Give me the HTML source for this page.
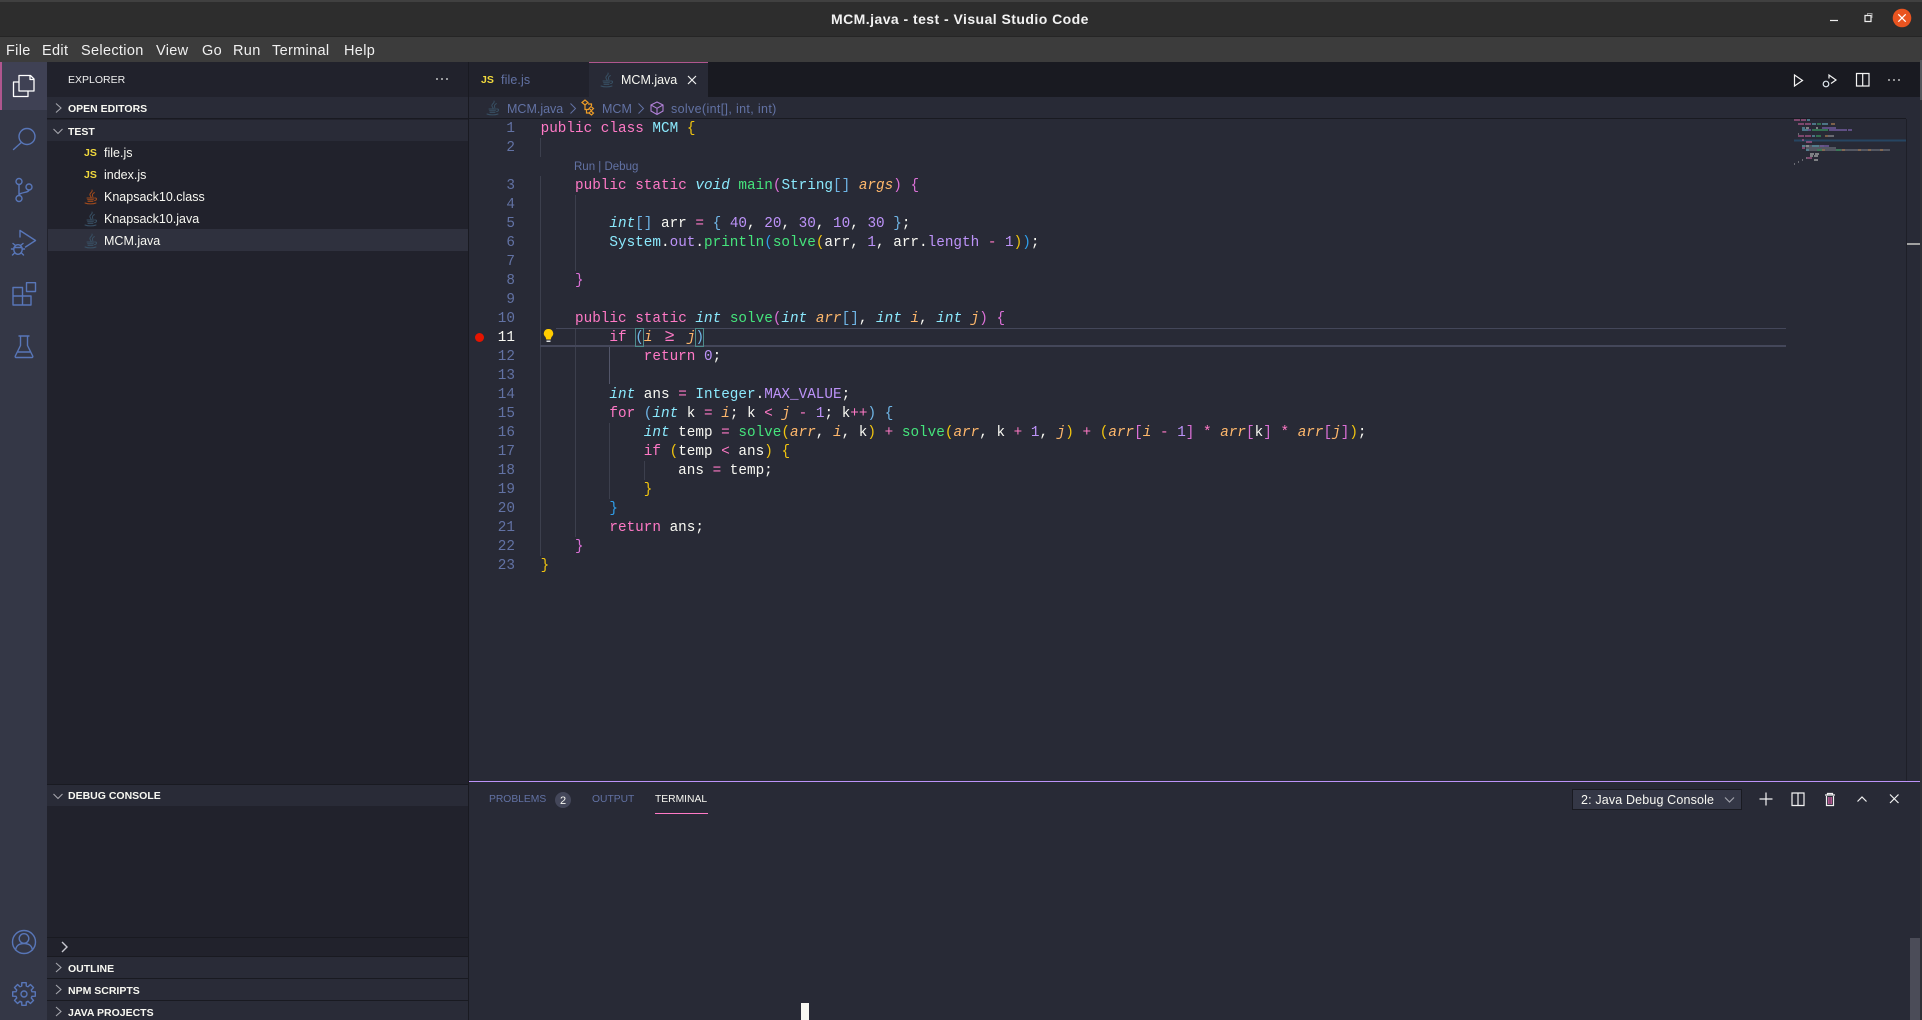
<!DOCTYPE html>
<html><head><meta charset="utf-8"><title>MCM.java - test - Visual Studio Code</title>
<style>
html,body{margin:0;padding:0;background:#282a36}
#r{position:relative;width:1922px;height:1020px;overflow:hidden;background:#282a36;font-family:"Liberation Sans",sans-serif;color:#f8f8f2}
.b{position:absolute}
.t{position:absolute;white-space:pre;font-size:12.5px;line-height:22px;height:22px;color:#f8f8f2}
.h{font-weight:bold;font-size:10.5px}
.m{font-size:14.5px;line-height:25px;height:25px;top:39px;letter-spacing:.33px;color:#f0f0f0}
.js{font-weight:bold;font-size:10.5px;color:#f1d93d}
.l{position:absolute;left:540.6px;height:19px;line-height:19px;white-space:pre;font-family:"Liberation Mono",monospace;font-size:14.33px;color:#f8f8f2}
.n{position:absolute;left:482px;width:33px;text-align:right;height:19px;line-height:19px;font-family:"Liberation Mono",monospace;font-size:14.33px;color:#6272a4}
.g{position:absolute;width:1px;background:#3c3f4d}
.k{color:#ff79c6}.ty{color:#8be9fd;font-style:italic}.c{color:#8be9fd}.f{color:#45e47c}.nu{color:#bd93f9}.p{color:#ffb86c;font-style:italic}.y{color:#f1c40f}.mm{color:#da70d6}.bl{color:#2f9eea}.lb{color:#6fb5e6}.v{color:#bd93f9}
.ge{display:inline-block;width:17.2px;text-align:center;font-size:17px;line-height:17px}
.pt{font-size:10.3px}
</style></head><body><div id="r">

<!-- title bar -->
<div class="b" style="left:0;top:0;width:1922px;height:37px;background:#2d2d2d;border-bottom:1px solid #252525;box-sizing:border-box"></div>
<div class="b" style="left:0;top:0;width:1922px;height:2px;background:#404040"></div>
<div class="t" style="left:831px;top:8px;font-weight:bold;font-size:14px;letter-spacing:.45px;color:#f2f2f2">MCM.java - test - Visual Studio Code</div>

<!-- menu -->
<div class="b" style="left:0;top:37px;width:1922px;height:25px;background:#3c3c3c"></div>
<div class="t m" style="left:6px">File</div>
<div class="t m" style="left:42px">Edit</div>
<div class="t m" style="left:81px">Selection</div>
<div class="t m" style="left:156px">View</div>
<div class="t m" style="left:202px">Go</div>
<div class="t m" style="left:233px">Run</div>
<div class="t m" style="left:272px">Terminal</div>
<div class="t m" style="left:344px">Help</div>

<!-- activity bar -->
<div class="b" style="left:0;top:62px;width:47px;height:958px;background:#343746"></div>
<div class="b" style="left:0;top:62px;width:47px;height:48px;background:#3f4154"></div>
<div class="b" style="left:0;top:62px;width:2px;height:48px;background:#b0568f"></div>

<!-- sidebar -->
<div class="b" style="left:47px;top:62px;width:421px;height:958px;background:#21222c"></div>
<div class="b" style="left:468px;top:62px;width:1px;height:958px;background:#191a21"></div>
<div class="t" style="left:68px;top:69px;font-size:10.5px;color:#f0f0f0">EXPLORER</div>
<div class="b" style="left:47px;top:97px;width:421px;height:22px;background:#292b37;border-bottom:1px solid #191a21;box-sizing:border-box"></div>
<div class="t h" style="left:68px;top:98px">OPEN EDITORS</div>
<div class="b" style="left:47px;top:120px;width:421px;height:21px;background:#292b37"></div>
<div class="t h" style="left:68px;top:121px">TEST</div>
<div class="b" style="left:48px;top:229px;width:420px;height:22px;background:#2f313e"></div>
<div class="t js" style="left:84px;top:142px">JS</div><div class="t" style="left:104px;top:142px">file.js</div>
<div class="t js" style="left:84px;top:164px">JS</div><div class="t" style="left:104px;top:164px">index.js</div>
<div class="t" style="left:104px;top:186px">Knapsack10.class</div>
<div class="t" style="left:104px;top:208px">Knapsack10.java</div>
<div class="t" style="left:104px;top:230px">MCM.java</div>

<div class="b" style="left:47px;top:784px;width:421px;height:1px;background:#191a21"></div>
<div class="b" style="left:47px;top:785px;width:421px;height:21px;background:#292b37"></div>
<div class="t h" style="left:68px;top:785px">DEBUG CONSOLE</div>
<div class="b" style="left:47px;top:937px;width:421px;height:1px;background:#191a21"></div>
<div class="b" style="left:47px;top:956px;width:421px;height:64px;background:#292b37"></div>
<div class="b" style="left:47px;top:956px;width:421px;height:1px;background:#191a21"></div>
<div class="b" style="left:47px;top:978px;width:421px;height:1px;background:#191a21"></div>
<div class="b" style="left:47px;top:1000px;width:421px;height:1px;background:#191a21"></div>
<div class="t h" style="left:68px;top:958px">OUTLINE</div>
<div class="t h" style="left:68px;top:980px">NPM SCRIPTS</div>
<div class="t h" style="left:68px;top:1002px">JAVA PROJECTS</div>

<!-- tabs -->
<div class="b" style="left:469px;top:62px;width:1453px;height:35px;background:#191a21"></div>
<div class="b" style="left:469px;top:62px;width:120px;height:35px;background:#21222c"></div>
<div class="b" style="left:589px;top:62px;width:119px;height:35px;background:#282a36;box-sizing:border-box;border-top:1px solid #b0568f"></div>
<div class="t js" style="left:481px;top:69px">JS</div>
<div class="t" style="left:501px;top:69px;color:#6272a4;letter-spacing:.1px">file.js</div>
<div class="t" style="left:621px;top:69px">MCM.java</div>

<!-- breadcrumbs -->
<div class="b" style="left:469px;top:118px;width:1437px;height:1px;background:#191a21"></div>
<div class="t" style="left:507px;top:98px;color:#6272a4">MCM.java</div>
<div class="t" style="left:602px;top:98px;color:#6272a4">MCM</div>
<div class="t" style="left:671px;top:98px;color:#6272a4;letter-spacing:.35px">solve(int[], int, int)</div>

<!-- editor decorations -->
<div class="g" style="left:540px;top:138px;height:19px"></div>
<div class="g" style="left:540px;top:176px;height:380px"></div>
<div class="g" style="left:575px;top:195px;height:76px"></div>
<div class="g" style="left:575px;top:328px;height:209px"></div>
<div class="g" style="left:609px;top:346px;height:38px;background:#53566a"></div>
<div class="g" style="left:609px;top:423px;height:76px"></div>
<div class="g" style="left:644px;top:461px;height:19px"></div>
<div class="b" style="left:556px;top:328px;width:1230px;height:1px;background:#44475a"></div>
<div class="b" style="left:540px;top:345px;width:1246px;height:2px;background:#44475a"></div>
<div class="b" style="left:635px;top:328px;width:7px;height:17px;border:1px solid #4d8c8c"></div>
<div class="b" style="left:695px;top:328px;width:7px;height:17px;border:1px solid #4d8c8c"></div>
<div class="b" style="left:474.5px;top:333px;width:9px;height:9px;border-radius:50%;background:#e51400"></div>

<!-- line numbers -->
<div class="n" style="top:120px">1</div><div class="n" style="top:139px">2</div>
<div class="n" style="top:177px">3</div><div class="n" style="top:196px">4</div>
<div class="n" style="top:215px">5</div><div class="n" style="top:234px">6</div>
<div class="n" style="top:253px">7</div><div class="n" style="top:272px">8</div>
<div class="n" style="top:291px">9</div><div class="n" style="top:310px">10</div>
<div class="n" style="top:329px;color:#f8f8f2">11</div><div class="n" style="top:348px">12</div>
<div class="n" style="top:367px">13</div><div class="n" style="top:386px">14</div>
<div class="n" style="top:405px">15</div><div class="n" style="top:424px">16</div>
<div class="n" style="top:443px">17</div><div class="n" style="top:462px">18</div>
<div class="n" style="top:481px">19</div><div class="n" style="top:500px">20</div>
<div class="n" style="top:519px">21</div><div class="n" style="top:538px">22</div>
<div class="n" style="top:557px">23</div>

<div class="t" style="left:574px;top:156px;font-size:11.5px;color:#6272a4">Run | Debug</div>

<!-- code -->
<div class="l" style="top:120px"><span class="k">public</span> <span class="k">class</span> <span class="c">MCM</span> <span class="y">{</span></div>
<div class="l" style="top:177px">    <span class="k">public</span> <span class="k">static</span> <span class="ty">void</span> <span class="f">main</span><span class="mm">(</span><span class="c">String</span><span class="lb">[]</span> <span class="p">args</span><span class="mm">)</span> <span class="mm">{</span></div>
<div class="l" style="top:215px">        <span class="ty">int</span><span class="lb">[]</span> arr <span class="k">=</span> <span class="lb">{</span> <span class="nu">40</span>, <span class="nu">20</span>, <span class="nu">30</span>, <span class="nu">10</span>, <span class="nu">30</span> <span class="lb">}</span>;</div>
<div class="l" style="top:234px">        <span class="c">System</span>.<span class="v">out</span>.<span class="f">println</span><span class="bl">(</span><span class="f">solve</span><span class="y">(</span>arr, <span class="nu">1</span>, arr.<span class="v">length</span> <span class="k">-</span> <span class="nu">1</span><span class="y">)</span><span class="bl">)</span>;</div>
<div class="l" style="top:272px">    <span class="mm">}</span></div>
<div class="l" style="top:310px">    <span class="k">public</span> <span class="k">static</span> <span class="ty">int</span> <span class="f">solve</span><span class="mm">(</span><span class="ty">int</span> <span class="p">arr</span><span class="lb">[]</span>, <span class="ty">int</span> <span class="p">i</span>, <span class="ty">int</span> <span class="p">j</span><span class="mm">)</span> <span class="mm">{</span></div>
<div class="l" style="top:329px">        <span class="k">if</span> <span class="lb">(</span><span class="p">i</span> <span class="k ge">≥</span> <span class="p">j</span><span class="lb">)</span></div>
<div class="l" style="top:348px">            <span class="k">return</span> <span class="nu">0</span>;</div>
<div class="l" style="top:386px">        <span class="ty">int</span> ans <span class="k">=</span> <span class="c">Integer</span>.<span class="v">MAX_VALUE</span>;</div>
<div class="l" style="top:405px">        <span class="k">for</span> <span class="lb">(</span><span class="ty">int</span> k <span class="k">=</span> <span class="p">i</span>; k <span class="k">&lt;</span> <span class="p">j</span> <span class="k">-</span> <span class="nu">1</span>; k<span class="k">++</span><span class="lb">)</span> <span class="lb">{</span></div>
<div class="l" style="top:424px">            <span class="ty">int</span> temp <span class="k">=</span> <span class="f">solve</span><span class="y">(</span><span class="p">arr</span>, <span class="p">i</span>, k<span class="y">)</span> <span class="k">+</span> <span class="f">solve</span><span class="y">(</span><span class="p">arr</span>, k <span class="k">+</span> <span class="nu">1</span>, <span class="p">j</span><span class="y">)</span> <span class="k">+</span> <span class="y">(</span><span class="p">arr</span><span class="mm">[</span><span class="p">i</span> <span class="k">-</span> <span class="nu">1</span><span class="mm">]</span> <span class="k">*</span> <span class="p">arr</span><span class="mm">[</span>k<span class="mm">]</span> <span class="k">*</span> <span class="p">arr</span><span class="mm">[</span><span class="p">j</span><span class="mm">]</span><span class="y">)</span>;</div>
<div class="l" style="top:443px">            <span class="k">if</span> <span class="y">(</span>temp <span class="k">&lt;</span> ans<span class="y">)</span> <span class="y">{</span></div>
<div class="l" style="top:462px">                ans <span class="k">=</span> temp;</div>
<div class="l" style="top:481px">            <span class="y">}</span></div>
<div class="l" style="top:500px">        <span class="bl">}</span></div>
<div class="l" style="top:519px">        <span class="k">return</span> ans;</div>
<div class="l" style="top:538px">    <span class="mm">}</span></div>
<div class="l" style="top:557px"><span class="y">}</span></div>

<!-- minimap / scrollbar -->
<div class="b" style="left:1906px;top:119px;width:1px;height:662px;background:#1e1f28"></div>
<div class="b" style="left:1907px;top:243px;width:13px;height:2px;background:#a0a0a0"></div>
<div class="b" style="left:1920px;top:62px;width:2px;height:958px;background:#2f3038"></div>
<div class="b" style="left:1920px;top:60px;width:2px;height:40px;background:#55565c"></div>

<!-- panel -->
<div class="b" style="left:469px;top:781px;width:1451px;height:1px;background:#bd93f9"></div>
<div class="t pt" style="left:489px;top:789px;color:#6272a4">PROBLEMS</div>
<div class="b" style="left:555px;top:792px;width:16px;height:16px;border-radius:50%;background:#44475a"></div>
<div class="t" style="left:560px;top:789.500px;font-size:11px">2</div>
<div class="t pt" style="left:592px;top:789px;color:#6272a4">OUTPUT</div>
<div class="t pt" style="left:655px;top:789px">TERMINAL</div>
<div class="b" style="left:655px;top:813px;width:53px;height:1px;background:#ff79c6"></div>
<div class="b" style="left:1572px;top:789px;width:170px;height:21px;box-sizing:border-box;background:#343746;border:1px solid #191a21"></div>
<div class="t" style="left:1581px;top:788.500px;font-size:12.5px;letter-spacing:.15px">2: Java Debug Console</div>
<div class="b" style="left:801px;top:1003px;width:8px;height:17px;background:#f8f8f2"></div>
<div class="b" style="left:1910px;top:938px;width:10px;height:82px;background:#4b4c58"></div>

<!-- all icons -->
<svg class="b" style="left:0;top:0" width="1922" height="1020" viewBox="0 0 1922 1020" fill="none">
<defs>
<g id="jv" stroke-width="1" stroke-linecap="round">
<path d="M8 0c1.2 2-3 3-2 5.2.3.8 1 1.2 1 2M10.400 2.600C8.400 3.600 8 5 8.800 6.600"/>
<path d="M3 8h7M3.600 9.800h5.800M4 11.400h5M11 8c2-.3 2.200 2-.4 2.600M1 13c3 1.200 8 1.200 11 0"/>
</g>
</defs>
<!-- window -->
<path d="M1830 20.500h8" stroke="#eee" stroke-width="1.200"/>
<path d="M1865 15.500h6v6h-6z" stroke="#eee" stroke-width="1.200"/><path d="M1867.500 15v-1.500h4.500v4.500" stroke="#999"/>
<circle cx="1902" cy="18" r="9.300" fill="#e95420"/><path d="M1898.300 14.300l7.400 7.400M1905.700 14.300l-7.400 7.400" stroke="#fff" stroke-width="1.300"/>

<!-- activity -->
<g stroke="#fff" stroke-width="1.300" stroke-linejoin="round">
<path d="M24 75.500h6.500l3.500 3.500v12h-15v-15.500z"/><path d="M30 75.500v4h4"/>
<path d="M19 82h-5.500v14.500h14.500v-5.500"/>
</g>
<g stroke="#5876b8" stroke-width="1.400" stroke-linecap="round" stroke-linejoin="round">
<circle cx="27" cy="136.500" r="8"/><path d="M21.300 142.500l-7.800 7"/>
<circle cx="19" cy="181.500" r="3"/><circle cx="19" cy="198.500" r="3"/><circle cx="29" cy="187" r="3"/>
<path d="M19 184.500v11M29 190c0 3-10 2-10 5.500"/>
<path d="M20 237v-6.500l15.500 10-10 6.500"/>
<ellipse cx="18" cy="249.500" rx="4.200" ry="4.800"/><path d="M15.500 245.500l-2.500-2M20.500 245.500l2.500-2M13.800 249h-2.300M22.200 249h2.300M14.500 253l-2 2M21.500 253l2 2M14 247.500h8"/>
<path d="M13 287.500h9.500v17.500h-9.500zM13 296h18v9h-8.500M22.500 296v9"/><path d="M26.500 282.700h9v8.800h-9z"/>
<path d="M19 336h10M20.500 336v9.500l-5.200 10.500a1 1 0 0 0 1 1.500h15.400a1 1 0 0 0 1-1.500l-5.200-10.500v-9.500M18 352h12"/>
<circle cx="24" cy="942" r="11.500"/><circle cx="24" cy="938.500" r="4.800"/><path d="M15.500 950c1-5 4-6.500 8.500-6.500s7.500 1.500 8.500 6.500"/>
<g transform="translate(24 994)"><circle r="3"/><path d="M11.290-2.190L11.290 2.190 7.980 2.290 7.260 4.020 9.530 6.430 6.430 9.530 4.020 7.260 2.290 7.980 2.190 11.290-2.190 11.290-2.290 7.980-4.020 7.260-6.430 9.530-9.530 6.430-7.260 4.020-7.980 2.290-11.290 2.190-11.290-2.190-7.980-2.290-7.260-4.020-9.530-6.430-6.430-9.530-4.020-7.260-2.290-7.980-2.190-11.290 2.190-11.290 2.290-7.980 4.020-7.260 6.430-9.530 9.530-6.430 7.260-4.020 7.980-2.290z"/></g>
</g>

<!-- sidebar chevrons -->
<g stroke="#a5a6ad" stroke-width="1.100">
<path d="M56 103.500l5 4.500-5 4.500M53.500 129l4.500 4.500 4.500-4.500"/>
<path d="M53.500 794l4.500 4.500 4.500-4.500"/>
<path d="M56 963l5 4.500-5 4.500M56 985l5 4.500-5 4.500M56 1007l5 4.500-5 4.500"/>
</g>
<path d="M62 942l5 5-5 5" stroke="#c8c8d0" stroke-width="1.400"/>
<circle cx="437" cy="79" r=".9" fill="#f0f0f0"/><circle cx="442" cy="79" r=".9" fill="#f0f0f0"/><circle cx="447" cy="79" r=".9" fill="#f0f0f0"/>

<!-- file icons -->
<use href="#jv" transform="translate(84 190)" stroke="#a44c1c"/>
<use href="#jv" transform="translate(84 212)" stroke="#385064"/>
<use href="#jv" transform="translate(84 234)" stroke="#385064"/>
<use href="#jv" transform="translate(600 73)" stroke="#385064"/>
<use href="#jv" transform="translate(486 101)" stroke="#385064"/>
<path d="M688 76l8 8M696 76l-8 8" stroke="#f0f0f0" stroke-width="1.200"/>

<!-- breadcrumb icons -->
<path d="M570.500 103.500l5 5-5 5M638.500 103.500l5 5-5 5" stroke="#6272a4"/>
<g stroke="#ee9d28" stroke-width="1.200"><path d="M582 102.500l3-2.500 3 2.500-3 2.500zM589 108.500l2-2 2.500 2-2 2zM589 113l2-2 2.500 2-2 2z"/><path d="M585 105v4.500h4M588 104h3.500v2M586.500 109.500v3.500h2.500"/></g>
<path d="M657 102l6 3v6l-6 3.500-6-3.500v-6zM651 105l6 3.300 6-3.300M657 108.300v6" stroke="#b180d7" stroke-width="1.100"/>

<!-- bulb -->
<path d="M548.500 329a4.500 4.500 0 0 1 3 8l-.8 2.500h-4.400l-.8-2.500a4.500 4.500 0 0 1 3-8z" fill="#ffcc00"/>
<path d="M546.500 340.500h4v1.500h-4z" fill="#ddd"/>

<!-- editor actions -->
<g stroke="#f4f4f4" stroke-width="1.200">
<path d="M1794.500 75l8 5.500-8 5.500z"/>
<path d="M1829 78.500v-3.500l7 5-5 3.500"/><circle cx="1826" cy="84" r="2.800" stroke="#dfe8f0"/>
<path d="M1856.500 73.500h12.500v12.500h-12.500zM1862.700 73.500v12.500"/>
</g>
<circle cx="1889" cy="80" r=".9" fill="#e8e8e8"/><circle cx="1894" cy="80" r=".9" fill="#e8e8e8"/><circle cx="1899" cy="80" r=".9" fill="#e8e8e8"/>

<!-- panel actions -->
<g stroke="#f2f2f2" stroke-width="1.200">
<path d="M1725 797.500l4.500 4.500 4.500-4.500" stroke="#a0a2ab"/>
<path d="M1759.500 799h13M1766 792.500v13"/>
<path d="M1792 793h12v12.500h-12zM1798 793v12.500"/>
<path d="M1825 795h10M1827.500 795v-1.500h5v1.500M1826.500 796v9.500h7v-9.500" /><path d="M1828.500 797v7M1830 797v7M1831.500 797v7" stroke="#b1568f"/>
<path d="M1857.500 801.500l4.500-4.500 4.500 4.500"/>
<path d="M1890 794.500l8.500 8.500M1898.500 794.500l-8.500 8.500"/>
</g>

<!-- minimap -->
<path d="M1794 139.500h112v2h-112z" fill="#264562"/>
<g stroke-width="1.500" opacity=".75">
<path stroke="#777a84" d="M1806 150h84M1802 146h22M1806 148h30"/>
<path stroke="#c0609b" d="M1794 120h6M1801 120h5M1798 124h6M1805 124h6M1798 136h6M1805 136h6M1802 140h2M1806 142h6M1802 148h3M1806 158h6"/>
<path stroke="#68b0c4" d="M1807 120h3M1812 124h4M1822 124h6M1802 128h3M1802 130h6M1812 136h3M1802 146h3M1812 146h7M1806 150h3"/>
<path stroke="#3ca866" d="M1817 124h4M1812 130h16M1816 136h5M1817 150h5M1836 150h5"/>
<path stroke="#bd8a5a" d="M1831 124h4M1825 136h3M1822 150h3M1842 150h3M1858 150h3M1868 150h3M1880 150h3"/>
<path stroke="#8a6cc0" d="M1808 130h3M1822 128h14M1829 130h18M1820 146h9M1848 130h4"/>
<path stroke="#c2c2c2" d="M1806 128h3M1816 128h2M1806 146h3M1810 154h4M1815 154h4M1814 156h4M1810 156h3M1814 160h4"/>
<path stroke="#9a9aa0" d="M1798 134h1M1798 162h1M1794 164h1M1802 160h1M1806 158h1M1828 136h6"/>
</g>
</svg>
</div></body></html>
